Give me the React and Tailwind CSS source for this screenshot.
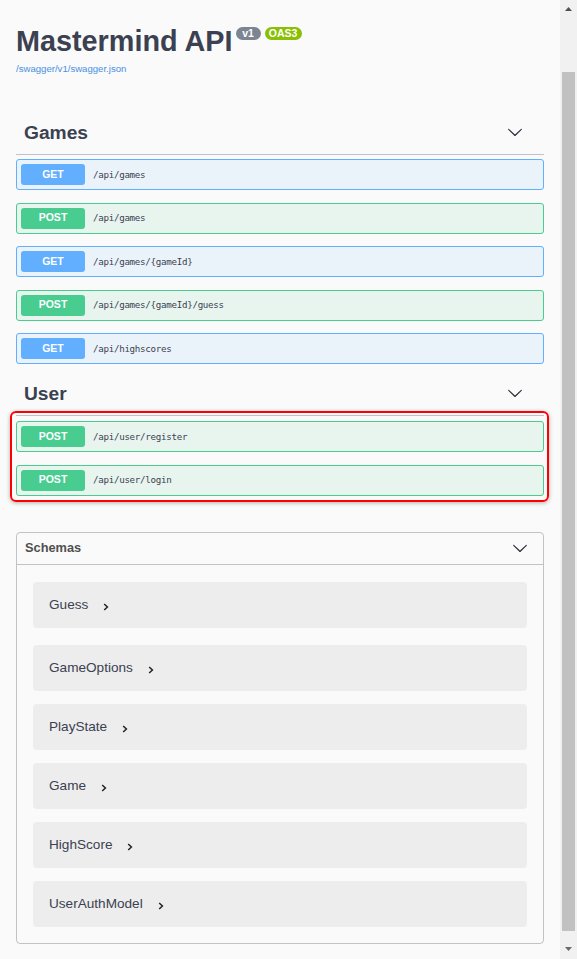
import React from 'react';

const methodStyles = {
  GET: { box: 'border-[#61affe] bg-[#ebf3fa]', badge: 'bg-[#61affe]' },
  POST: { box: 'border-[#49cc90] bg-[#e8f5ef]', badge: 'bg-[#49cc90]' },
};

const games = [
  { method: 'GET', path: '/api/games' },
  { method: 'POST', path: '/api/games' },
  { method: 'GET', path: '/api/games/{gameId}' },
  { method: 'POST', path: '/api/games/{gameId}/guess' },
  { method: 'GET', path: '/api/highscores' },
];

const user = [
  { method: 'POST', path: '/api/user/register' },
  { method: 'POST', path: '/api/user/login' },
];

const schemas = ['Guess', 'GameOptions', 'PlayState', 'Game', 'HighScore', 'UserAuthModel'];

const Chevron = ({ className }) => (
  <svg viewBox="0 0 20 20" fill="currentColor" className={className}>
    <path d="M17.418 6.109c.272-.268.709-.268.979 0s.271.701 0 .969l-7.908 7.83c-.27.268-.707.268-.979 0l-7.908-7.83c-.27-.268-.27-.701 0-.969.271-.268.709-.268.979 0L10 13.25l7.418-7.141z" />
  </svg>
);

const TagHeader = ({ name }) => (
  <div className="flex h-[43px] items-center justify-between border-b border-[rgba(59,65,81,0.3)] pl-[8px] pr-[21px]">
    <h3 className="text-[19.2px] font-bold leading-[24px] text-[#3b4151]">{name}</h3>
    <Chevron className="mb-[3px] h-[16px] w-[16px] text-[#2b2f3a]" />
  </div>
);

const Operation = ({ method, path }) => (
  <div className={`flex h-[31px] items-center rounded-[3px] border pl-[4px] ${methodStyles[method].box}`}>
    <span
      className={`flex h-[21px] w-[64px] items-center justify-center rounded-[3px] text-[10.5px] font-bold text-white ${methodStyles[method].badge}`}
    >
      {method}
    </span>
    <span className="pl-[8px] font-['DejaVu_Sans_Mono',monospace] text-[9.2px] tracking-[-0.3px] text-[#3b4151]">
      {path}
    </span>
  </div>
);

const SchemaRow = ({ name, first }) => (
  <div className={`flex h-[46px] items-center rounded-[4px] bg-[#ededed] pl-[16px] pt-[1px] ${first ? 'mb-[4px]' : ''}`}>
    <span className="text-[13.6px] leading-[16px] text-[#3b4151]">{name}</span>
    <svg width="6" height="8" viewBox="0 0 6 8" className="ml-[15px] mt-[3px] text-[#222]">
      <path d="M1.2 1 L4.4 4 L1.2 7" fill="none" stroke="currentColor" strokeWidth="1.5" />
    </svg>
  </div>
);

const Scrollbar = () => (
  <aside className="flex w-[17px] shrink-0 flex-col bg-[#f1f1f1]">
    <div className="flex h-[17px] items-center justify-center">
      <svg width="7" height="4" viewBox="0 0 7 4">
        <path d="M0 4 L3.5 0 L7 4 Z" fill="#505050" />
      </svg>
    </div>
    <div className="flex-1 px-[2px] pb-[11px] pt-[55px]">
      <div className="h-full bg-[#c1c1c1]" />
    </div>
    <div className="flex h-[17px] items-center justify-center pb-[3px]">
      <svg width="7" height="4" viewBox="0 0 7 4">
        <path d="M0 0 L3.5 4 L7 0 Z" fill="#6a6a6a" />
      </svg>
    </div>
  </aside>
);

const App = () => {
  return (
    <div className="flex h-[959px] w-full overflow-hidden bg-[#fafafa] font-['Liberation_Sans',Arial,sans-serif]">
      <main className="min-w-0 flex-1 px-[16px] pt-[24px]">
        <div className="flex items-start">
          <h1 className="text-[28.8px] font-bold leading-[35px] text-[#3b4151]">Mastermind API</h1>
          <span className="ml-[3px] mt-[3px] flex h-[13px] w-[25px] items-center justify-center rounded-full bg-[#7d8492] text-[10.5px] font-bold leading-[13px] text-white">
            v1
          </span>
          <span className="ml-[4px] mt-[3px] flex h-[13px] w-[37px] items-center justify-center rounded-full bg-[#89bf04] text-[10.5px] font-bold leading-[13px] text-white">
            OAS3
          </span>
        </div>
        <a className="mt-[4px] block text-[9.6px] leading-[12px] text-[#4990e2]">/swagger/v1/swagger.json</a>

        <section className="mt-[37px]">
          <TagHeader name="Games" />
          <div className="mt-[4px] flex flex-col gap-[12.5px]">
            {games.map((op, i) => (
              <Operation key={i} {...op} />
            ))}
          </div>
        </section>

        <section className="relative mt-[9px]">
          <TagHeader name="User" />
          <div className="mt-[5px] flex flex-col gap-[12.5px]">
            {user.map((op, i) => (
              <Operation key={i} {...op} />
            ))}
          </div>
          <div className="pointer-events-none absolute -bottom-[6px] -left-[6px] -right-[5px] top-[38px] rounded-[6px] border-2 border-[#ff0000] shadow-[0_1px_4px_rgba(0,0,0,0.3)]" />
        </section>

        <section className="mt-[36px] rounded-[4px] border border-[rgba(59,65,81,0.3)]">
          <div className="flex h-[32px] items-center justify-between border-b border-[rgba(59,65,81,0.3)] pl-[8px] pr-[15px]">
            <h4 className="text-[12.8px] font-bold leading-[16px] text-[#505050]">Schemas</h4>
            <Chevron className="h-[16px] w-[16px] text-[#2b2f3a]" />
          </div>
          <div className="flex flex-col gap-[13px] px-[16px] pb-[16px] pt-[17px]">
            {schemas.map((name, i) => (
              <SchemaRow key={name} name={name} first={i === 0} />
            ))}
          </div>
        </section>
      </main>
      <Scrollbar />
    </div>
  );
};

export default App;
